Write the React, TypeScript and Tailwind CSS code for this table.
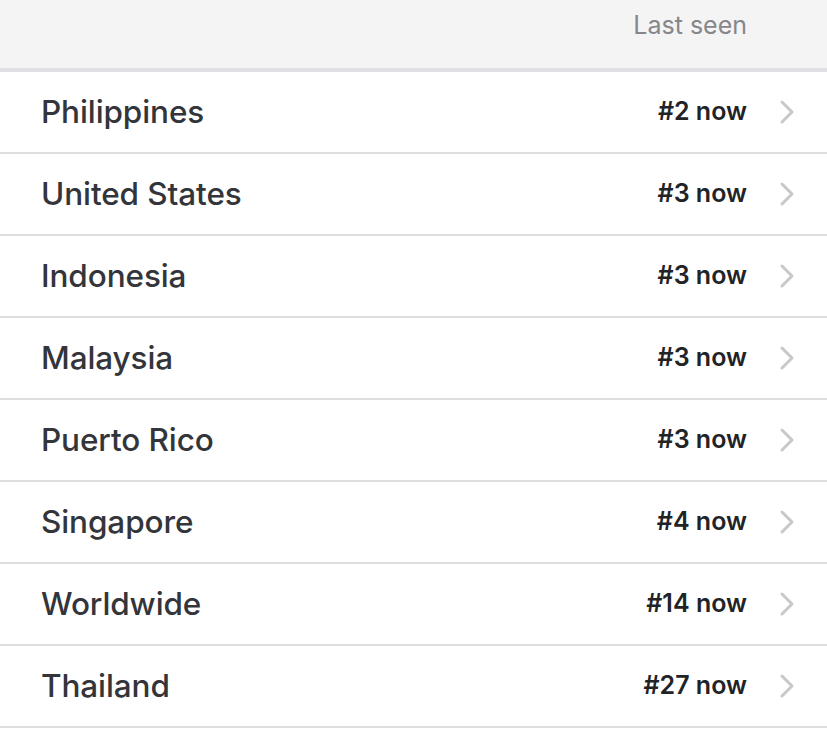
const rows = [
  { name: "Philippines", rank: "#2 now" },
  { name: "United States", rank: "#3 now" },
  { name: "Indonesia", rank: "#3 now" },
  { name: "Malaysia", rank: "#3 now" },
  { name: "Puerto Rico", rank: "#3 now" },
  { name: "Singapore", rank: "#4 now" },
  { name: "Worldwide", rank: "#14 now" },
  { name: "Thailand", rank: "#27 now" },
  { name: "Japan", rank: "#31 now" },
];

function Chevron() {
  return (
    <svg width="18" height="26" viewBox="0 0 18 26" className="shrink-0">
      <path
        d="M4 3 L14 13 L4 23"
        fill="none"
        stroke="#c7c7cc"
        strokeWidth="3"
        strokeLinecap="round"
        strokeLinejoin="round"
      />
    </svg>
  );
}

export default function App() {
  return (
    <div className="w-[827px] h-[756px] overflow-hidden bg-white font-['Inter',sans-serif]">
      <div className="h-[72px] bg-[#f4f4f5] border-b-4 border-[#dfe0e4] flex items-start justify-end pt-[9px] pr-[80px]">
        <span className="text-[25px] text-[#86868b] leading-[32px]">Last seen</span>
      </div>
      {rows.map((r) => (
        <div
          key={r.name}
          className="h-[82px] border-b-2 border-[#dedee0] flex items-center pl-[41px] pr-[31px]"
        >
          <span className="flex-1 text-[31.5px] font-medium text-[#33353a] tracking-[-0.1px]">{r.name}</span>
          <span className="text-[25px] font-semibold text-[#222326] mr-[31px]">{r.rank}</span>
          <Chevron />
        </div>
      ))}
    </div>
  );
}
